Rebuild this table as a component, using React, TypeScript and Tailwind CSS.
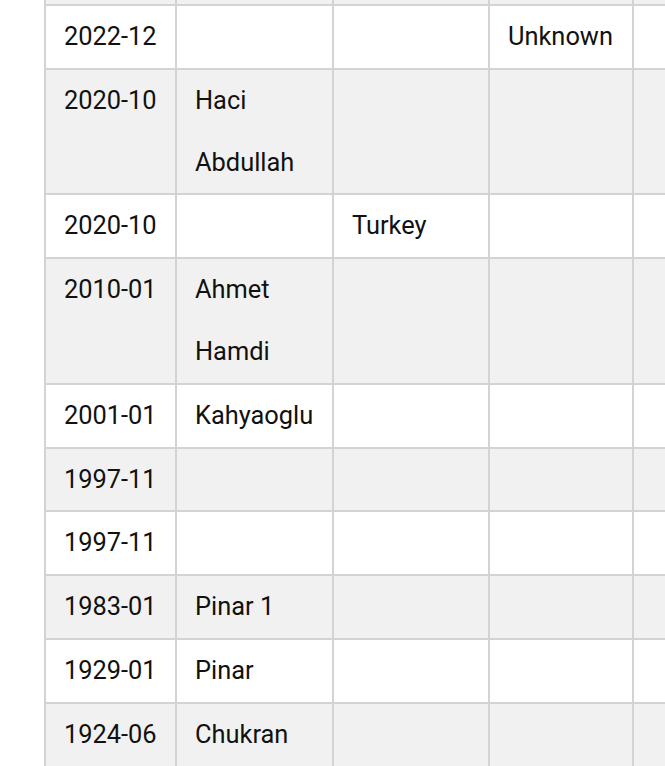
import React from "react";

type Row = [string, React.ReactNode, string, string];

const rows: Row[] = [
  ["2022-12", "", "", "Unknown"],
  ["2020-10", <>Haci<br />Abdullah</>, "", ""],
  ["2020-10", "", "Turkey", ""],
  ["2010-01", <>Ahmet<br />Hamdi</>, "", ""],
  ["2001-01", "Kahyaoglu", "", ""],
  ["1997-11", "", "", ""],
  ["1997-11", "", "", ""],
  ["1983-01", "Pinar 1", "", ""],
  ["1929-01", "Pinar", "", ""],
  ["1924-06", "Chukran", "", ""],
];

const cell =
  "border-r-2 border-b-2 border-[#d3d3d3] pl-[18px] pr-[19px] py-0 align-top whitespace-nowrap text-left font-normal";

export default function App() {
  return (
    <div
      className="w-[665px] h-[766px] overflow-hidden bg-white pl-[44px]"
      style={{ fontFamily: "Roboto, 'Noto Sans', sans-serif" }}
    >
      <table className="table-fixed border-separate border-spacing-0 w-[740px] -mt-[57.8px] text-[25.4px] leading-[61.8px] text-[#111]">
        <colgroup>
          <col className="w-[133px]" />
          <col className="w-[157px]" />
          <col className="w-[156px]" />
          <col className="w-[144px]" />
          <col className="w-[150px]" />
        </colgroup>
        <tbody>
          <tr className="bg-[#f1f1f1]">
            <td className={`${cell} border-l-2`}>&nbsp;</td>
            <td className={cell}></td>
            <td className={cell}></td>
            <td className={cell}></td>
            <td className={cell}></td>
          </tr>
          {rows.map((r, i) => (
            <tr key={i} className={i % 2 === 0 ? "bg-white" : "bg-[#f1f1f1]"}>
              <td className={`${cell} border-l-2`}>{r[0]}</td>
              <td className={cell}>{r[1]}</td>
              <td className={cell}>{r[2]}</td>
              <td className={cell}>{r[3]}</td>
              <td className={cell}></td>
            </tr>
          ))}
        </tbody>
      </table>
    </div>
  );
}
